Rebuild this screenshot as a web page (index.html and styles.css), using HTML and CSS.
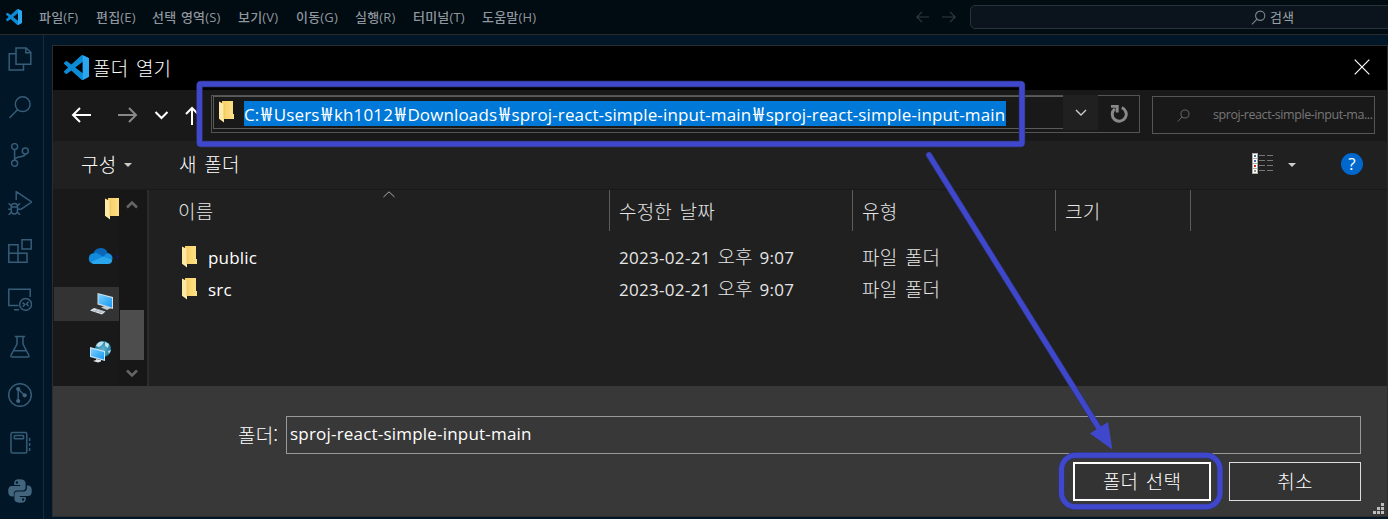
FILE: index.html
```html
<!DOCTYPE html>
<html lang="ko">
<head>
<meta charset="utf-8">
<title>폴더 열기</title>
<link rel="stylesheet" href="styles.css">
</head>
<body>
<svg class="defs" width="0" height="0">
  <defs>
    <linearGradient id="fold" x1="0" x2="1"><stop offset="0" stop-color="#f7cf62"/><stop offset="1" stop-color="#ffe08a"/></linearGradient>
    <linearGradient id="screen" x1="0" y1="0" x2="1" y2="1"><stop offset="0" stop-color="#7cd0ff"/><stop offset="1" stop-color="#1798f2"/></linearGradient>
    <radialGradient id="globe"><stop offset="0" stop-color="#5fb3cf"/><stop offset="1" stop-color="#257fa3"/></radialGradient>
    <symbol id="folder" viewBox="0 0 15 22">
      <path d="M3 0H14V13H15V18H3Z" fill="url(#fold)"/>
      <path d="M0 0.5L5 3V21.5L3.4 20.2L0 17.8Z" fill="#ffe9a6"/>
      <path d="M5 3V18" stroke="#e9bf58" stroke-width=".7"/>
    </symbol>
    <symbol id="vscode" viewBox="0 0 24 24">
      <path d="M23.15 2.587L18.21.21a1.494 1.494 0 0 0-1.705.29l-9.46 8.63-4.12-3.128a.999.999 0 0 0-1.276.057L.327 7.261A1 1 0 0 0 .326 8.74L3.899 12 .326 15.26a1 1 0 0 0 .001 1.479L1.65 17.94a.999.999 0 0 0 1.276.057l4.12-3.128 9.46 8.63a1.492 1.492 0 0 0 1.704.29l4.942-2.377A1.5 1.5 0 0 0 24 20.06V3.939a1.5 1.5 0 0 0-.85-1.352zm-5.146 14.861L10.826 12l7.178-5.448v10.896z" fill="#0b8ad6"/>
      <path d="M18 .15L23.15 2.587Q24 3 24 3.94V20.06Q24 21 23.15 21.41L18 23.9Z" fill="#2aa7f0"/>
    </symbol>
    <symbol id="search" viewBox="0 0 24 24">
      <circle cx="14.7" cy="9.2" r="7.4"/><path d="M9.6 14.6L1.5 23"/>
    </symbol>
  </defs>
</svg>
<div class="titlebar">
  <svg class="app-icon" width="16" height="16"><use href="#vscode"/></svg>
  <nav class="menu">
    <span class="m1">파일(F)</span><span class="m2">편집(E)</span><span class="m3">선택 영역(S)</span><span class="m4">보기(V)</span><span class="m5">이동(G)</span><span class="m6">실행(R)</span><span class="m7">터미널(T)</span><span class="m8">도움말(H)</span>
  </nav>
  <svg class="history" width="40" height="12" viewBox="0 0 40 12"><path d="M13 6H1M6 .8L.8 6L6 11.2M26 6H39M34 .8L39.2 6L34 11.2"/></svg>
  <div class="command">
    <svg class="line-icon" width="15" height="15"><use href="#search"/></svg><span>검색</span>
  </div>
</div>
<div class="workspace">
  <div class="activity">
    <svg viewBox="0 0 24 24"><path d="M8 .9H18.2L22.8 5.3V17.2H8Z M17.8 1V5.7H22.6 M8 6.7H1.2V23H15.5V17.5"/></svg>
    <svg viewBox="0 0 24 24"><use href="#search"/></svg>
    <svg viewBox="0 0 24 24"><circle cx="6.6" cy="3.6" r="3"/><circle cx="6.6" cy="20.2" r="3"/><circle cx="17.3" cy="8.1" r="3"/><path d="M6.6 6.7V17.1M17.3 11.1C17.3 15 7.5 12.5 6.6 17"/></svg>
    <svg viewBox="0 0 24 24"><path d="M8.2 9V.6L23.6 11L12.5 18.7M3.2 16.2Q3.2 12.6 6.3 12.6Q9.5 12.6 9.5 16.2V19Q9.5 23 6.3 23Q3.2 23 3.2 19ZM3.2 16.1H9.5M.6 12.2L3.4 15M12 12.2L9.3 15M.2 18.2H3M9.6 18.2H12.4M.6 24L3.5 21M12 24L9.3 21"/></svg>
    <svg viewBox="0 0 24 24"><path d="M.8 5.7H10V14.2H19V23.2H.8ZM.8 14.2H10V23M14 .8H23.2V10H14Z"/></svg>
    <svg viewBox="0 0 24 24"><path d="M10.5 18.5H.8V2.2H22.2V10M6 22.7H11"/><circle cx="17.6" cy="17.4" r="5.9"/><path d="M14.6 15.6L16.8 17.6L14.8 19.8M20.6 14.8L18.5 17L20.7 19.2"/></svg>
    <svg viewBox="0 0 24 24"><path d="M6.8 1.5H17.1M9 1.5V9L3 20.2Q2.5 22 4.3 22.1H19.6Q21.5 22 20.8 20.2L15 9V1.5M5.9 15.8H18"/></svg>
    <svg viewBox="0 0 24 24"><circle cx="12" cy="12" r="11.3"/><path d="M10.2 6V18M10.5 6.3L16.4 12.2"/><g class="solid"><circle cx="10.2" cy="6" r="2.1"/><circle cx="10.2" cy="18" r="2.1"/><circle cx="16.7" cy="12.3" r="2.1"/></g></svg>
    <svg viewBox="0 0 24 24"><rect x="3" y="1.6" width="15.8" height="20.5" rx="1.5"/><rect x="6.3" y="4.5" width="9.3" height="3.2" rx=".8"/><path d="M21.6 7V10M21.6 12V15M21.6 17V20"/></svg>
    <svg viewBox="0 0 24 24"><path class="solid" d="M11.8.2C7.2.2 6.2 1.8 6.2 4V6H12.2V7H3.8C1.2 7 .2 9 .2 12S1.2 17.4 3.8 17.4H5.8V14.5C5.8 12.4 7.3 11.4 9 11.4H14.8C16.6 11.4 17.6 10.1 17.6 8.5V4C17.6 1.5 15.6.2 11.8.2ZM8.9 2.3A1.2 1.2 0 1 1 8.9 4.7A1.2 1.2 0 1 1 8.9 2.3Z M12.2 23.8C16.8 23.8 17.8 22.2 17.8 20V18H11.8V17H20.2C22.8 17 23.8 15 23.8 12S22.8 6.6 20.2 6.6H18.8V9.5C18.8 11.6 17 12.6 15 12.6H9.2C7.4 12.6 6.4 13.9 6.4 15.5V20C6.4 22.5 8.4 23.8 12.2 23.8ZM15.1 21.7A1.2 1.2 0 1 1 15.1 19.3A1.2 1.2 0 1 1 15.1 21.7Z"/></svg>
  </div>
  <div class="dialog">
    <div class="dialog-title">
      <svg width="25" height="25"><use href="#vscode"/></svg>
      <span class="ko">폴더 열기</span>
      <svg class="close" width="16" height="16" viewBox="0 0 16 16"><path d="M.7 .7L15.3 15.3M15.3 .7L.7 15.3"/></svg>
    </div>
    <div class="navbar">
      <svg class="nav-arrows" width="128" height="20" viewBox="0 0 128 20">
        <path d="M20 10H2M9 3L2 10L9 17M84.500 7L90.500 13L96.500 7M121 20V3M115 9L121 3L127 9"/>
        <path class="off" d="M47 10H65M58 3L65 10L58 17"/>
      </svg>
      <div class="address">
        <div class="path">
          <svg width="15" height="22"><use href="#folder"/></svg>
          <span class="selected-text">C:<b>₩</b>Users<b>₩</b>kh1012<b>₩</b>Downloads<b>₩</b>sproj-react-simple-input-main<b>₩</b>sproj-react-simple-input-main</span>
        </div>
        <div class="drop"><svg width="12" height="8" viewBox="0 0 12 8"><path d="M1 1L6 6L11 1"/></svg></div>
        <div class="refresh"><svg width="18" height="18" viewBox="0 0 18 18"><path d="M11.8 2.7A7 7 0 1 1 4.8 3.8"/><path d="M1 1.2H7.2V7.4" /></svg></div>
      </div>
      <div class="search-box"><svg width="13" height="13"><use href="#search"/></svg><span>sproj-react-simple-input-ma...</span></div>
    </div>
    <div class="toolbar">
      <span class="organize ko">구성</span><i class="caret"></i><span class="new-folder ko">새 폴더</span>
      <svg class="view" width="21" height="21" viewBox="0 0 21 21">
        <path d="M0 0H6V21H0Z" fill="#aaa"/><path d="M1 1H5V5H1ZM1 6H5V10H1ZM1 11H5V15H1ZM1 16H5V20H1Z" fill="#fff"/>
        <path d="M2 2H4V4H2Z" fill="#367888"/><path d="M2 7H4V9H2Z" fill="#4869a8"/><path d="M2 12H4V14H2Z" fill="#d32a20"/><path d="M2 17H4V19H2Z" fill="#8b9874"/>
        <path d="M7 2.5H13M15 2.5H21M7 7.5H13M15 7.5H21M7 12.5H13M15 12.5H21M7 17.5H13M15 17.5H21" stroke="#777"/>
      </svg>
      <i class="caret"></i><span class="help">?</span>
    </div>
    <div class="content">
      <div class="tree">
        <div class="node node-folder"><svg width="15" height="22"><use href="#folder"/></svg></div>
        <div class="node"><svg width="31" height="16" viewBox="0 0 31 16"><path d="M5 7A7.8 7.8 0 0 1 19.5 4L17 10L5 9Z" fill="#0867b8"/><path d="M6 5.2A5 5 0 0 1 9 5L22 13L5 15.5A5.2 5.2 0 0 1 6 5.2Z" fill="#118bdc"/><path d="M15 8.8L19 5.1A5.3 5.3 0 0 1 24.5 11L20 14Z" fill="#168fdf"/><path d="M3 14L15 8.8L24.4 11.8Q23.8 16 20 16H5.5Q3.7 15.6 3 14Z" fill="#2aa7ec"/><path d="M29 7h1v3h-1z" fill="#1010b8"/></svg></div>
        <div class="node active"><svg width="24" height="22" viewBox="0 0 24 22"><path d="M7.5 0L23 4V16L7.5 11.5Z" fill="#d4dde4"/><path d="M8.5 1.3L22 5V14.5L8.5 10.6Z" fill="url(#screen)"/><path d="M11 14.5L15 12.8L21 15L17 17Z" fill="#c5ccd2"/><path d="M4 15L15.5 18.4L12 21.5L0 17.4Z" fill="#e2e7eb"/><path d="M3 17L13 20M6 16L14 18.6M8 16L5 19M12 17L9 20.4" stroke="#899ba8" stroke-width=".6"/></svg></div>
        <div class="node"><svg width="23" height="22" viewBox="0 0 23 22"><circle cx="14" cy="8" r="8" fill="url(#globe)"/><path d="M8 3Q11 -.5 15 1L13 4L10 6L7 5ZM16 1L20 3L19 7L16 5ZM19 10L22 9L20 13Z" fill="#bce2eb"/><path d="M1 6L16 10V20L1 16Z" fill="#c7e7fa"/><path d="M2 7.5L15 11V18.5L2 15Z" fill="url(#screen)"/><path d="M7 18L12 19V20.5L9 21.6L4 20L7 19Z" fill="#e0e4e7"/></svg></div>
      </div>
      <div class="scroll">
        <svg width="12" height="9" viewBox="0 0 12 9"><path d="M1 7.5L6 2.5L11 7.5"/></svg>
        <div class="thumb"></div>
        <svg width="12" height="9" viewBox="0 0 12 9"><path d="M1 1.5L6 6.5L11 1.5"/></svg>
      </div>
      <div class="files">
        <div class="row head ko"><span>이름<svg class="sort" width="12" height="7" viewBox="0 0 12 7"><path d="M.5 6L6 .8L11.5 6"/></svg></span><span>수정한 날짜</span><span>유형</span><span>크기</span></div>
        <div class="row"><span class="name"><svg width="15" height="22"><use href="#folder"/></svg>public</span><span class="date">2023-02-21 <em class="ko">오후</em> 9:07</span><span class="ko">파일 폴더</span></div>
        <div class="row"><span class="name"><svg width="15" height="22"><use href="#folder"/></svg>src</span><span class="date">2023-02-21 <em class="ko">오후</em> 9:07</span><span class="ko">파일 폴더</span></div>
      </div>
    </div>
    <div class="footer">
      <div class="field"><label class="ko">폴더:</label><div class="input">sproj-react-simple-input-main</div></div>
      <div class="actions"><div class="button primary ko">폴더 선택</div><div class="button ko">취소</div></div>
      <svg class="grip" width="11" height="11" viewBox="0 0 11 11"><path d="M8 0h3v3h-3zM4 4h3v3h-3zM8 4h3v3h-3zM0 8h3v3h-3zM4 8h3v3h-3zM8 8h3v3h-3z" fill="#bdbdbd"/></svg>
    </div>
  </div>
</div>
<svg class="annotation" width="1388" height="519" viewBox="0 0 1388 519">
  <g class="edge"><rect x="199.5" y="84" width="822.5" height="60" rx="1"/><path d="M929 155L1100 430"/><rect x="1061.5" y="455.3" width="158.5" height="51.5" rx="14"/></g>
  <g class="mark"><rect x="199.5" y="84" width="822.5" height="60" rx="1"/><path d="M929 155L1100 430"/><rect x="1061.5" y="455.3" width="158.5" height="51.5" rx="14"/></g>
  <path d="M1090 433.5L1108 422L1112.3 449.5Z" fill="#3f48cc"/>
</svg>
</body>
</html>
```

FILE: styles.css
```css
* { box-sizing: border-box; }
body {
  margin: 0; width: 1388px; height: 519px; overflow: hidden; position: relative;
  background: #011627; color: #fff;
  font: 17px/24px "Open Sans", "Noto Sans CJK KR", sans-serif;
  letter-spacing: .2px;
}
svg { display: block; flex: none; fill: none; }
span, label { white-space: nowrap; }
em { font-style: normal; }
.ko { font-family: "Noto Sans CJK KR", sans-serif; font-size: 19px; font-weight: 300; letter-spacing: .2px; word-spacing: 2px; }
.defs { position: absolute; }
.titlebar { height: 35px; display: flex; align-items: center; background: #010b12; border-bottom: 1px solid #2b2b2b; padding-left: 6px; color: #8f969d; font-size: 13px; letter-spacing: 0; }
.menu { width: 894px; flex: none; padding-left: 17px; display: flex; letter-spacing: .2px; word-spacing: 1px; font-weight: 500; }
.m1 { width: 57px; } .m2 { width: 56px; } .m3 { width: 86px; } .m4 { width: 58px; } .m5 { width: 59px; } .m6 { width: 58px; } .m7 { width: 69px; }
.history { stroke: #303a42; stroke-width: 1.2; }
.command { margin-left: 14px; width: 440px; height: 24px; flex: none; border: 1px solid #27323b; border-radius: 5px; background: #0b141c; display: flex; align-items: center; padding-left: 280px; gap: 4px; color: #9ba1a6; }
.line-icon { stroke: #7b838a; stroke-width: 1.8; }
.workspace { display: flex; height: 484px; }
.activity { width: 44px; flex: none; border-right: 1px solid #122d42; display: flex; flex-direction: column; gap: 24px; padding: 12px 0 0 8px; }
.activity svg { width: 24px; height: 24px; stroke: #365c78; stroke-width: 1.5; }
.activity .solid { fill: #42647d; stroke: none; fill-rule: evenodd; }
.dialog { margin: 10px 0 0 8px; width: 1336px; height: 472px; flex: none; border: 1px solid #292d30; display: flex; flex-direction: column; background: #383838; }
.dialog-title { height: 44px; flex: none; background: #000; display: flex; align-items: center; padding: 0 17px 0 11px; gap: 4px; }
.dialog-title svg { margin-top: -2px; }
.dialog-title .close { margin-left: auto; stroke: #fff; stroke-width: 1.2; }
.navbar { height: 51px; flex: none; background: #191919; display: flex; align-items: flex-start; padding: 5px 0 0 18px; }
.nav-arrows { margin: 10px 12px 0 0; stroke: #fff; stroke-width: 2; }
.nav-arrows .off { stroke: #888; }
.address { width: 929px; height: 38px; border: 1px solid #535353; display: flex; }
.path { width: 850px; height: 33px; margin-left: 1px; border: 1px solid #5b5b5b; border-right: 0; display: flex; padding: 4px 0 0 5px; gap: 10px; }
.selected-text { width: 762px; height: 25px; background: #0078d7; line-height: 27px; letter-spacing: .13px; }
.selected-text b { display: inline-flex; justify-content: center; width: 14.4px; font-weight: 400; font-size: 19px; line-height: 20px; letter-spacing: 0; }
.drop { width: 35px; height: 35px; margin-top: -1px; background: #202020; display: grid; place-items: center; stroke: #ccc; stroke-width: 1.4; }
.refresh { flex: 1; display: grid; place-items: center; stroke: #888; stroke-width: 3; }
.search-box { width: 223px; height: 38px; margin: 1px 0 0 12px; border: 1px solid #555; display: flex; align-items: center; padding-left: 24px; gap: 23px; color: #777; font-size: 12.5px; letter-spacing: -.43px; stroke: #777; stroke-width: 1.5; }
.search-box span { stroke: none; }
.toolbar { height: 49px; flex: none; background: #202020; border-bottom: 1px solid #191919; display: flex; align-items: center; padding-left: 28px; }
.toolbar .ko { margin-top: -2px; }
.organize { width: 37px; }
.caret { border: 4px solid transparent; border-top: 4px solid #ccc; border-bottom: 0; margin-left: 6px; }
.new-folder { width: 1027px; margin-left: 47px; }
.view { margin-left: 46px; margin-top: -3px; }
.toolbar .view + .caret { margin-left: 15px; }
.help { width: 22px; height: 22px; margin-left: 45px; margin-top: -2px; border-radius: 50%; background: #0068cc; text-align: center; line-height: 21px; }
.content { height: 196px; flex: none; display: flex; background: #202020; }
.tree { width: 66px; background: #191919; overflow: hidden; padding-top: 1px; }
.node { height: 34px; margin-bottom: 14px; display: flex; align-items: center; padding-left: 36px; }
.node.node-folder { padding-left: 52px; padding-top: 1px; }
.node.active { background: #333; margin-left: 1px; }
.node:nth-child(2) { padding-left: 35px; }
.scroll { width: 28px; background: #171717; padding: 10px 4px 7px 1px; display: flex; flex-direction: column; align-items: center; stroke: #666; stroke-width: 2.5; }
.thumb { width: 24px; height: 50px; margin: 101px 0 9px; background: #4d4d4d; }
.files { flex: 1; border-left: 2px solid #2b2b2b; color: #e6e6e6; }
.row { display: grid; grid-template-columns: 461px 243px 203px 135px; height: 32px; align-items: center; }
.row > span { padding-left: 9px; }
.row > .ko { margin-top: -3px; }
.row > span:first-child { padding-left: 29px; }
.row.head { height: 41px; margin-bottom: 11px; }
.row.head > span { height: 41px; line-height: 41px; border-right: 1px solid #5c5c5c; }
.sort { position: absolute; left: 383px; top: 191px; stroke: #aaa; }
.date { word-spacing: 2px; letter-spacing: .3px; margin-top: -1px; }
.date .ko { line-height: 20px; }
.name { display: flex; gap: 11px; align-items: center; color: #fff; }
.name svg { margin-top: -2px; }
.row > span.name:first-child { padding-left: 33px; }
.footer { flex: 1; padding: 30px 0 0 185px; position: relative; }
.field, .actions { display: flex; }
.field label { width: 48px; line-height: 37px; }
.input { width: 1075px; height: 38px; border: 1px solid #999; padding-left: 3px; line-height: 34px; }
.actions { gap: 18px; margin: 8px 0 0 835px; }
.button { width: 132px; height: 39px; border: 1px solid #ddd; background: #333; text-align: center; line-height: 36px; }
.button.primary { width: 138px; border: 2px solid #fff; line-height: 34px; }
.grip { position: absolute; right: 3px; bottom: 2px; }
.annotation { position: absolute; left: 0; top: 0; }
.edge, .mark { stroke: #3f48cc; stroke-width: 5; stroke-linecap: round; stroke-linejoin: round; }
.edge { stroke: #303678; stroke-width: 6.3; }
```
